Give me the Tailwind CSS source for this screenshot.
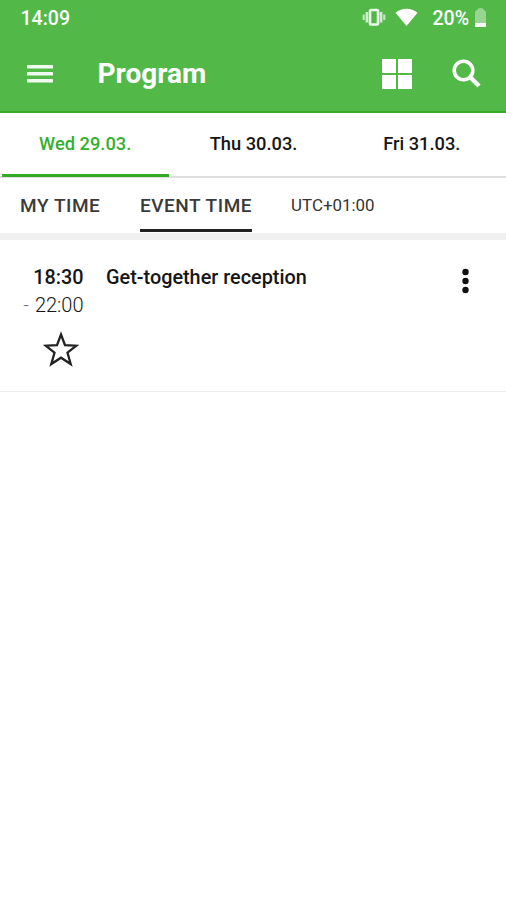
<!DOCTYPE html>
<html lang="en">
<head>
<meta charset="utf-8">
<title>Program</title>
<script src="https://cdn.jsdelivr.net/npm/@tailwindcss/browser@4"></script>
</head>
<body class="bg-white">
<div class="w-[506px] h-[900px] overflow-hidden bg-white font-[Roboto,sans-serif] text-[#161616] whitespace-nowrap flex flex-col">
  <header class="h-[113px] shrink-0 bg-[#52b948] border-b-2 border-[#35ab25] text-white">
    <div class="h-9 flex items-center pl-[20.5px] pr-5">
      <span class="text-[19.5px] leading-9 pt-[2px] font-medium">14:09</span>
      <svg class="ml-auto" width="24" height="20" viewBox="0 0 24 20" fill="none" stroke="#fff">
        <rect x="8" y="2" width="8" height="14.500" rx="1" stroke-width="2.600" opacity=".9"/>
        <path d="M4.900 4v10.500M19.100 4v10.500" stroke-width="2.600" opacity=".75"/>
        <path d="M1.700 6.500v5.500M22.300 6.500v5.500" stroke-width="2.200" opacity=".65"/>
      </svg>
      <svg class="ml-[9px]" width="23" height="20" viewBox="0 0 23 20" fill="#fff"><path d="M.5 4.800C7-.7 16-.7 22.500 4.800L11.500 18z"/></svg>
      <span class="ml-[14px] text-[19.5px] leading-9 pt-[2px] font-medium">20%</span>
      <svg class="ml-[6px]" width="11" height="20" viewBox="0 0 11 20" fill="#fff">
        <path d="M2 2Q2.500 0 5.500 0T9 2Q11 2.500 11 4.500V15H0V4.500Q0 2.500 2 2z" opacity=".4"/><path d="M0 15h11v3.200q0 .8-.8.800H.8q-.8 0-.8-.8z"/>
      </svg>
    </div>
    <div class="h-[75px] flex items-center pl-[27px] pr-[25px]">
      <svg width="26" height="20" viewBox="0 0 26 20" fill="#fff" fill-opacity=".92"><rect y="1" width="26" height="3.500" rx=".5"/><rect y="8" width="26" height="3.500" rx=".5"/><rect y="15" width="26" height="3.500" rx=".5"/></svg>
      <h1 class="ml-[44.500px] text-[28px] leading-8 font-bold">Program</h1>
      <svg class="ml-auto" width="30" height="30" viewBox="0 0 30 30" fill="#fff"><path d="M0 0h14v14H0zM16 0h14v14H16zM0 16h14v14H0zM16 16h14v14H16z"/></svg>
      <svg class="ml-[40px]" width="29" height="29" viewBox="0 0 29 29" fill="none" stroke="#fff"><circle cx="11.500" cy="11.500" r="9.300" stroke-width="3.600"/><path d="M17.500 17.500l9.500 9.500" stroke-width="4.400"/></svg>
    </div>
  </header>
  <nav class="h-[65px] shrink-0 grid grid-cols-3 pl-[1px] border-b-2 border-[#dedede] text-[18.300px] font-medium text-center leading-[62px]">
    <div class="relative text-[#35b02c]">Wed 29.03.<i class="absolute left-[1px] right-0 bottom-[-1px] h-[3px] bg-[#35ab25]"></i></div>
    <div>Thu 30.03.</div>
    <div>Fri 31.03.</div>
  </nav>
  <div class="h-[62px] shrink-0 flex pl-[20px] border-b-[7px] border-[#efefef] leading-[55px]">
    <span class="text-[19px] font-medium tracking-[.55px] text-[#3a3a3a]">MY TIME</span>
    <span class="relative ml-[39.500px] text-[19px] font-medium tracking-[.55px] text-[#3a3a3a]">EVENT TIME<i class="absolute left-0 right-0 top-[51px] h-[3px] bg-[#222]"></i></span>
    <span class="ml-[39px] text-[16.900px] text-[#333]">UTC+01:00</span>
  </div>
  <article class="h-[152px] shrink-0 flex border-b border-[#ececec] pt-[24px]">
    <div class="w-[83.500px] flex flex-col items-end leading-7">
      <span class="text-[19.800px] font-medium">18:30</span>
      <span class="text-[20px] font-light -mt-px"><span class="text-[#777] mr-px">-</span> 22:00</span>
      <svg class="mt-[12px] mr-[4.500px]" width="36" height="36" viewBox="0 0 36 36" fill="none" stroke="#222" stroke-width="2.300"><path d="M18 3.500L22 14.200L33.300 14.700L24.500 21.700L27.700 33L18 26.700L8.300 33L11.500 21.700L2.700 14.700L14 14.200z"/></svg>
    </div>
    <h2 class="ml-[22.500px] text-[19.850px] leading-7 font-medium">Get-together reception</h2>
    <svg class="ml-auto mr-[37px] mt-[4px]" width="7" height="26" viewBox="0 0 7 26" fill="#111"><circle cx="3.500" cy="4" r="3.200"/><circle cx="3.500" cy="13" r="3.200"/><circle cx="3.500" cy="22" r="3.200"/></svg>
  </article>
</div>
</body>
</html>
